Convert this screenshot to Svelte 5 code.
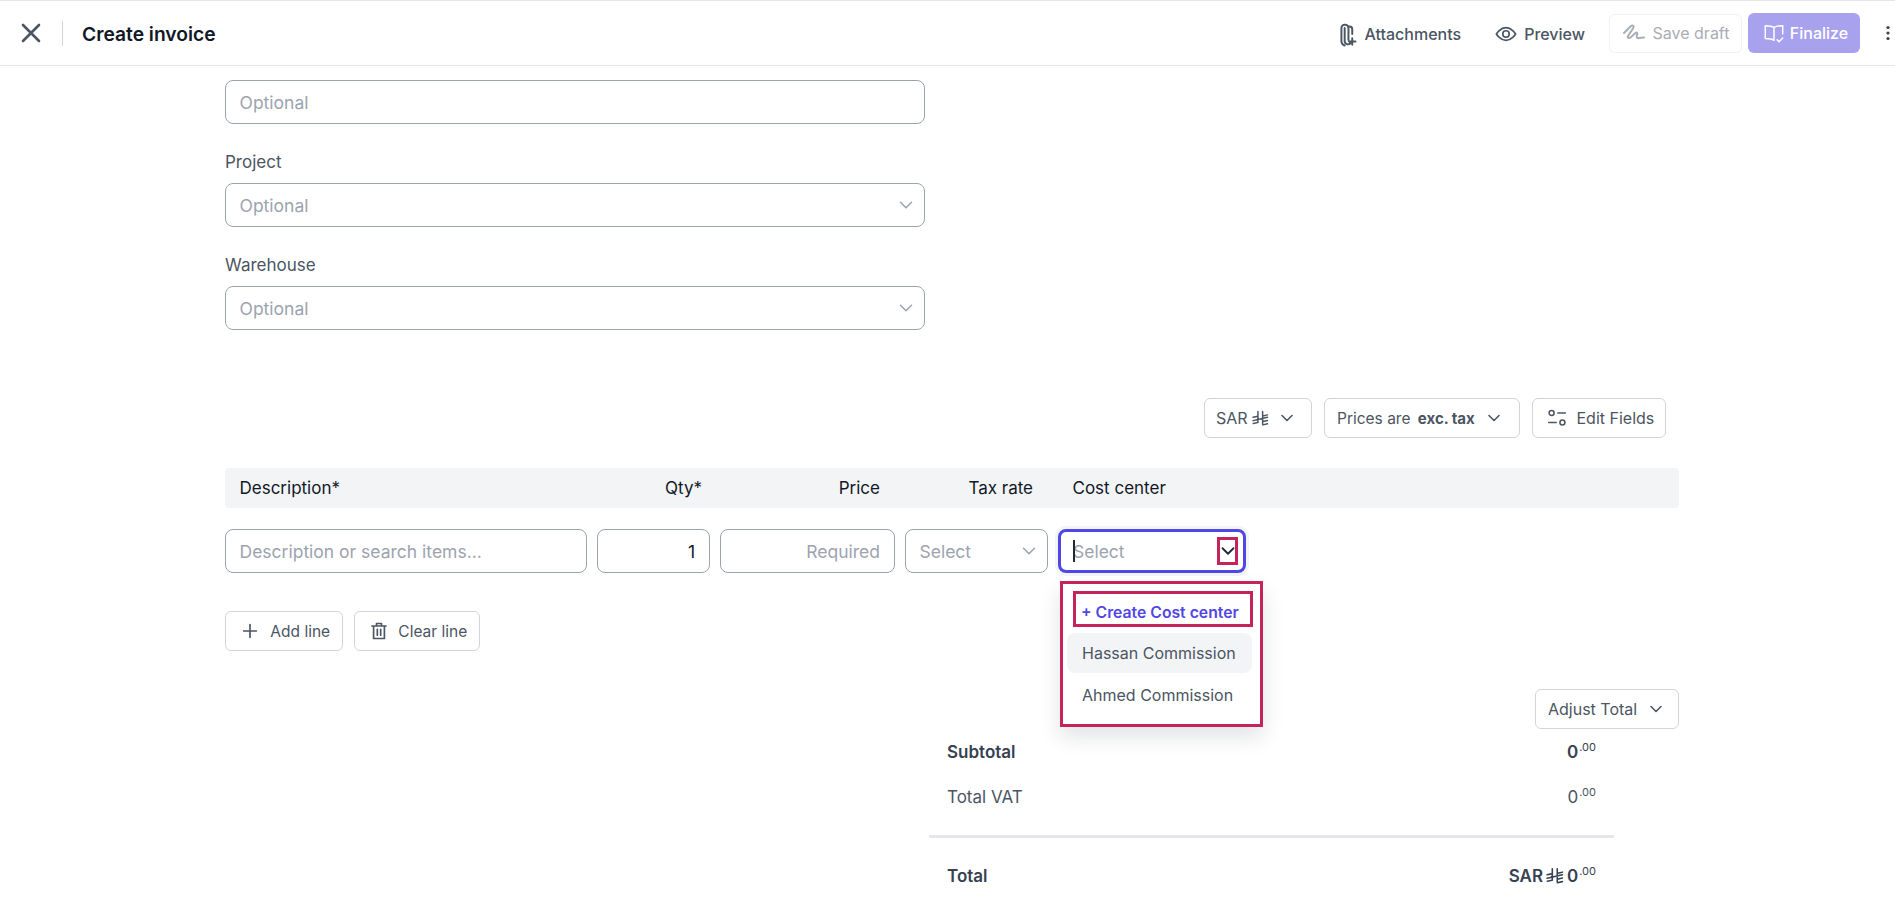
<script>
  const chevron = "M6 9l6 6 6-6";
</script>

{#snippet chev(cls)}
  <svg class={cls} viewBox="0 0 24 24" fill="none" stroke="currentColor" stroke-width="2" stroke-linecap="round" stroke-linejoin="round"><path d={chevron} /></svg>
{/snippet}

{#snippet riyal(cls)}
  <svg class={cls} viewBox="0 0 16 16" fill="none" stroke="currentColor" stroke-width="1.4" stroke-linecap="round"><path d="M5.6 1.5v10.2L1.2 12.7M10 1.5v12M1 6.9l4.6-1M1 10l13.6-3.1M10.2 5.6l4.4-1M10.2 10.8l4.4-1M10.2 14l4.4-1" /></svg>
{/snippet}

<div class="page">
  <header class="topbar">
    <div class="left">
      <svg class="close" viewBox="0 0 20 20" fill="none" stroke="currentColor" stroke-width="2.6" stroke-linecap="round"><path d="M2 2l16 16M18 2L2 18" /></svg>
      <span class="sep"></span>
      <h1>Create invoice</h1>
    </div>
    <div class="actions">
      <span class="link attach">
        <svg viewBox="0 0 24 24" fill="none" stroke="currentColor" stroke-width="1.8" stroke-linecap="round" stroke-linejoin="round"><path d="M8 6.5v12a3 3 0 0 0 5.5 1.7M5 6.5A3 3 0 0 1 8 3.5h.5a3 3 0 0 1 3 3v11M5 6.5V19a4.5 4.5 0 0 0 3 3.6M11.500 5h1a2.500 2.500 0 0 1 2.500 2.500V12M15 16v6M12 19h6" /></svg>
        Attachments
      </span>
      <span class="link preview">
        <svg viewBox="0 0 24 24" fill="none" stroke="currentColor" stroke-width="1.8" stroke-linecap="round" stroke-linejoin="round"><path d="M1.500 12S5.500 5 12 5s10.500 7 10.500 7-4 7-10.500 7S1.500 12 1.500 12z" /><circle cx="12" cy="12" r="3.500" /></svg>
        Preview
      </span>
      <span class="save">
        <svg viewBox="0 0 24 24" fill="none" stroke="currentColor" stroke-width="2" stroke-linecap="round" stroke-linejoin="round"><path d="M2 12l7-7c2-1.500 3.500.5 2 2.500L6 15c-1 2 1 2.500 2.500 1.500l5-4.500c1.500-1 2.500 0 1.500 2-1 2.500.5 3.500 2 3l5-.5" /></svg>
        Save draft
      </span>
      <span class="finalize">
        <svg viewBox="0 0 24 24" fill="none" stroke="currentColor" stroke-width="1.6" stroke-linecap="round" stroke-linejoin="round"><path d="M12 6c-2-1.500-5-2-9.500-2v14c4.500 0 7.500.5 9.500 2M12 6c2-1.500 5-2 9.500-2v9M12 6v14M15.500 19.500l2 2 4-4" /></svg>
        Finalize
      </span>
      <svg class="dots" viewBox="0 0 4 16" fill="currentColor"><circle cx="2" cy="2.500" r="1.600" /><circle cx="2" cy="8" r="1.600" /><circle cx="2" cy="13.500" r="1.600" /></svg>
    </div>
  </header>

  <main class="content">
    <section class="form">
      <div class="field first"><div class="control">Optional</div></div>
      <div class="field">
        <span class="label">Project</span>
        <div class="control">Optional {@render chev("chev")}</div>
      </div>
      <div class="field">
        <span class="label">Warehouse</span>
        <div class="control">Optional {@render chev("chev")}</div>
      </div>
    </section>

    <div class="toolbar">
      <span class="tbtn sar">SAR {@render riyal("riyal")} {@render chev("bchev")}</span>
      <span class="tbtn prices">Prices are <b>exc. tax</b> {@render chev("bchev")}</span>
      <span class="tbtn edit">
        <svg viewBox="0 0 24 24" fill="none" stroke="currentColor" stroke-width="1.8" stroke-linecap="round"><circle cx="5.500" cy="6" r="3" /><path d="M13 6h9M2 17.500h9" /><circle cx="18.500" cy="17.500" r="3" /></svg>
        Edit Fields
      </span>
    </div>

    <div class="grid head">
      <span class="pl">Description*</span>
      <span class="r qty">Qty*</span>
      <span class="r price">Price</span>
      <span class="r tax">Tax rate</span>
      <span class="pl">Cost center</span>
    </div>

    <div class="grid row">
      <div class="control cell">Description or search items...</div>
      <div class="control cell one">1</div>
      <div class="control cell end">Required</div>
      <div class="control cell">Select {@render chev("chev")}</div>
      <div class="costwrap">
        <div class="control cell focus">
          <span class="caret"></span>Select
          <span class="mark">{@render chev("darkchev")}</span>
        </div>
        <div class="menu">
          <div class="create"><span>+ Create Cost center</span></div>
          <div class="opt hot">Hassan Commission</div>
          <div class="opt">Ahmed Commission</div>
        </div>
      </div>
    </div>

    <div class="linebtns">
      <span class="tbtn add">
        <svg viewBox="0 0 24 24" fill="none" stroke="currentColor" stroke-width="1.8" stroke-linecap="round"><path d="M12 5v14M5 12h14" /></svg>
        Add line
      </span>
      <span class="tbtn clear">
        <svg viewBox="0 0 24 24" fill="none" stroke="currentColor" stroke-width="2" stroke-linecap="round" stroke-linejoin="round"><path d="M3.500 6h17M9 6V3h6v3M5.500 6v15h13V6M10 10v7M14 10v7" /></svg>
        Clear line
      </span>
    </div>

    <div class="adjust"><span class="tbtn">Adjust Total {@render chev("bchev")}</span></div>

    <section class="summary">
      <div class="sline strong first-line"><span>Subtotal</span><span class="val">0<sup>.00</sup></span></div>
      <div class="sline vat"><span>Total VAT</span><span class="val">0<sup>.00</sup></span></div>
      <div class="rule"></div>
      <div class="sline strong total"><span>Total</span><span class="val">SAR {@render riyal("riyal big")} 0<sup>.00</sup></span></div>
    </section>
  </main>
</div>

<style>
  :global(body) { margin: 0; background: #fff; }
  .page {
    width: 1895px;
    height: 902px;
    overflow: hidden;
    font-family: Inter, "Noto Sans", sans-serif;
    color: #4b5563;
    box-sizing: border-box;
    border-top: 1px solid #e5e7eb;
  }
  .topbar {
    height: 65px;
    box-sizing: border-box;
    border-bottom: 1px solid #e5e7eb;
    display: flex;
    align-items: center;
    justify-content: space-between;
    padding: 0 5px 0 21px;
  }
  .left { display: flex; align-items: center; }
  .close { width: 20px; height: 20px; color: #4b5563; }
  .sep { width: 1px; height: 25px; background: #d1d5db; margin: 0 19px 0 21px; }
  h1 { margin: 0; font-size: 19.25px; font-weight: 600; color: #111827; line-height: 30px; position: relative; top: 1px; }
  .actions { display: flex; align-items: center; font-size: 16px; font-weight: 500; }
  .link { display: flex; align-items: center; color: #4b5563; margin-top: 2px; }
  .attach { gap: 3px; margin-right: 34px; }
  .preview { gap: 7px; margin-right: 24px; }
  .preview svg { width: 22px; height: 22px; }
  .attach svg { width: 26px; height: 26px; }
  .save {
    height: 39px; width: 133px; box-sizing: border-box;
    display: flex; align-items: center; justify-content: center; gap: 7px;
    border: 1px solid #f0f1f3; border-radius: 6px; color: #a8adb6; margin-right: 6px;
    font-weight: 400;
  }
  .save svg { width: 24px; height: 24px; }
  .finalize {
    height: 40px; width: 112px; box-sizing: border-box;
    display: flex; align-items: center; justify-content: center; gap: 5px;
    background: #a8a2ee; border-radius: 6px; color: #fff;
    padding-left: 3px;
  }
  .finalize svg { width: 22px; height: 22px; }
  .dots { width: 4px; height: 16px; color: #374151; margin-left: 26px; }

  .content { padding: 14px 216px 0 225px; }
  .form { width: 700px; }
  .field { margin-bottom: 26px; }
  .field.first { margin-bottom: 26px; }
  .label { display: block; font-size: 17px; line-height: 24px; color: #4b5563; margin-bottom: 9px; height: 24px; }
  .control {
    height: 44px;
    box-sizing: border-box;
    border: 1px solid #9ca3af;
    border-radius: 8px;
    padding: 0 14px 0 13.5px;
    display: flex;
    align-items: center;
    justify-content: space-between;
    font-size: 17.5px;
    color: #9ca3af;
    background: #fff;
    white-space: nowrap;
  }
  .chev { width: 22px; height: 22px; color: #9ca3af; margin-right: -7px; flex: none; stroke-width: 1.7; }

  .toolbar { display: flex; justify-content: flex-end; gap: 12px; margin-top: 68px; padding-right: 13px; }
  .tbtn {
    height: 40px; box-sizing: border-box;
    display: inline-flex; align-items: center;
    border: 1px solid #d1d5db; border-radius: 6px;
    font-size: 16px; font-weight: 400; color: #4b5563; background: #fff;
    white-space: pre;
  }
  .tbtn svg { flex: none; }
  .bchev { width: 20px; height: 20px; color: #4b5563; stroke-width: 1.9; }
  .riyal { width: 17px; height: 17px; color: #4b5563; }
  .sar { width: 108px; padding-left: 11px; gap: 0; }
  .sar .riyal { margin: 0 8px 0 0; }
  .prices { width: 196px; padding-left: 12px; font-size: 15.5px; }
  .prices b { font-weight: 700; font-size: 15px; margin: 0 9px 0 3px; }
  .edit { width: 134px; padding-left: 14px; gap: 5px; }
  .edit svg { width: 20px; height: 20px; }

  .grid {
    display: grid;
    grid-template-columns: 362px 113px 175px 143px 188px;
    column-gap: 10px;
  }
  .head {
    height: 40px; align-items: center; margin-top: 30px;
    background: #f3f4f6; border-radius: 4px;
    font-size: 17px; color: #111827;
    width: 1454px;
  }
  .pl { padding-left: 14.5px; }
  .r { text-align: right; }
  .qty { padding-right: 8px; }
  .price { padding-right: 15px; }
  .tax { padding-right: 15px; }
  .row { margin-top: 21px; }
  .cell { height: 44px; }
  .one { justify-content: flex-end; color: #111827; }
  .end { justify-content: flex-end; }
  .costwrap { position: relative; }
  .focus {
    border: 3px solid #5046e5;
    box-shadow: 0 0 0 3px #f3f4f6;
    padding: 0 5px 0 12px;
    position: relative;
  }
  .caret {
    position: absolute; left: 12px; top: 8px; width: 2px; height: 22px; background: #1f2937;
  }
  .mark {
    display: flex; align-items: center; justify-content: center;
    width: 21px; height: 28px; box-sizing: border-box;
    border: 3px solid #c4245a;
  }
  .darkchev { width: 22px; height: 22px; color: #1f2937; flex: none; }
  .menu {
    position: absolute; left: 2px; top: 52px; width: 203px; height: 146px;
    box-sizing: border-box;
    border: 3px solid #c4245a;
    background: #fff;
    box-shadow: 0 10px 20px rgba(17, 24, 39, .12);
    font-size: 16px;
    padding: 7px 7px 0 4px;
  }
  .create {
    margin: 0 0 0 6px;
    width: 180px; height: 36px; box-sizing: border-box;
    border: 3px solid #c4245a;
    display: flex; align-items: center; padding-left: 5px;
    color: #5046e5; font-weight: 600; font-size: 15.75px;
    white-space: nowrap;
  }
  .create span { margin-top: 6px; }
  .opt {
    height: 40px; line-height: 40px; border-radius: 8px; padding-left: 15px;
    color: #4b5563; white-space: nowrap;
    box-sizing: border-box;
  }
  .opt.hot { background: #f3f4f6; width: 185px; margin-top: 6px; }
  .opt + .opt { margin-top: 2px; }

  .linebtns { display: flex; gap: 11px; margin-top: 38px; font-size: 15.5px; }
  .linebtns .tbtn { font-size: 15.5px; }
  .add { width: 118px; padding-left: 13px; gap: 5px; }
  .add svg { width: 22px; height: 22px; }
  .clear { width: 126px; padding-left: 14px; gap: 5px; }
  .clear svg { width: 20px; height: 20px; }

  .adjust { display: flex; justify-content: flex-end; margin-top: 38px; }
  .adjust .tbtn { width: 144px; padding-left: 12px; gap: 4px; }

  .summary { margin-left: 704px; width: 685px; font-size: 17px; color: #4b5563; }
  .sline { display: flex; justify-content: space-between; padding: 0 18px 0 18px; line-height: 24px; }
  .strong { font-weight: 600; color: #374151; }
  .first-line { margin-top: 11px; }
  .vat { margin-top: 21px; }
  .rule { height: 3px; background: #e5e7eb; margin-top: 26px; }
  .total { margin-top: 26px; }
  .val { display: inline-flex; align-items: center; }
  sup { font-size: 11px; font-weight: 400; line-height: 10px; align-self: flex-start; margin-top: 2px; margin-left: 1px; }
  .big { width: 18px; height: 18px; margin: 0 3px 0 3px; color: #374151; }
</style>
